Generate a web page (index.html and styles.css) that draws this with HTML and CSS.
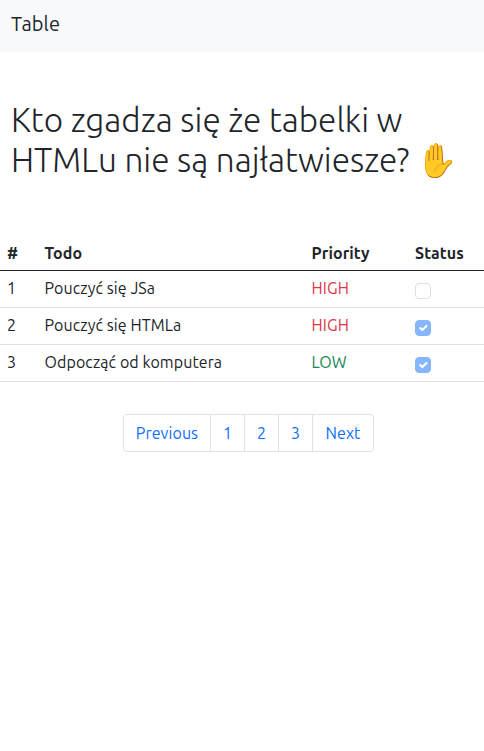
FILE: index.html
```html
<!DOCTYPE html>
<html lang="pl">
<head>
<meta charset="utf-8">
<title>Table</title>
<link rel="stylesheet" href="styles.css">
</head>
<body>
<nav class="navbar"><a class="brand">Table</a></nav>
<h1 class="title">Kto zgadza się że tabelki w HTMLu nie są najłatwiesze? ✋</h1>
<table class="table">
<thead><tr><th class="num">#</th><th class="todo">Todo</th><th class="priority">Priority</th><th>Status</th></tr></thead>
<tbody>
<tr><td>1</td><td>Pouczyć się JSa</td><td class="high">HIGH</td><td><span class="check"></span></td></tr>
<tr><td>2</td><td>Pouczyć się HTMLa</td><td class="high">HIGH</td><td><span class="check checked"><svg viewBox="0 0 20 20"><path d="M6 10l3 3 6-6"/></svg></span></td></tr>
<tr><td>3</td><td>Odpocząć od komputera</td><td class="low">LOW</td><td><span class="check checked"><svg viewBox="0 0 20 20"><path d="M6 10l3 3 6-6"/></svg></span></td></tr>
</tbody>
</table>
<nav class="pages"><a class="previous">Previous</a><a>1</a><a>2</a><a>3</a><a class="next">Next</a></nav>
</body>
</html>
```
FILE: styles.css
```css
* { box-sizing: border-box; }
body {
  margin: 0;
  background: #fff;
  color: #212529;
  font: 16px/24px Ubuntu, "Noto Sans", sans-serif;
  letter-spacing: .09px;
}
.navbar { height: 52px; padding: 9px 11px; background: #f8f9fa; }
.brand { display: block; font-size: 20px; line-height: 30px; }
.title {
  margin: 48px 0 0;
  padding: 0 11px;
  height: 133px;
  font: 300 33.4px/40px Ubuntu, "Open Sans", "Noto Color Emoji", sans-serif;
  letter-spacing: 0;
}
.table {
  width: 486px;
  margin-left: -1px;
  table-layout: fixed;
  border-collapse: separate;
  border-spacing: 0;
}
.num { width: 37.5px; }
.todo { width: 267px; }
.priority { width: 103.5px; }
th, td { height: 37px; padding: 5px 8px; border-bottom: 1px solid #dee2e6; text-align: left; vertical-align: top; white-space: nowrap; }
thead th { height: 38px; padding-top: 8px; border-bottom-color: #212529; font-weight: 700; }
.high { color: #dc3545; }
.low { color: #198754; }
.check {
  display: block;
  width: 16px;
  height: 16px;
  margin-top: 7px;
  border: 1px solid #dfdfdf;
  border-radius: 4px;
}
.checked { background: #86b7fe; border-color: #86b7fe; }
.check svg { display: block; width: 14px; height: 14px; fill: none; stroke: #fff; stroke-width: 3; stroke-linecap: round; stroke-linejoin: round; }
.pages {
  display: flex;
  width: 251px;
  height: 38px;
  margin: 32px 0 0 123px;
  border: 1px solid #dee2e6;
  border-radius: 4px;
  color: #0d6efd;
  line-height: 36px;
  text-align: center;
}
.pages a { width: 34px; border-right: 1px solid #dee2e6; }
.pages .previous { width: 87px; }
.pages .next { width: 60px; border: 0; }
```
